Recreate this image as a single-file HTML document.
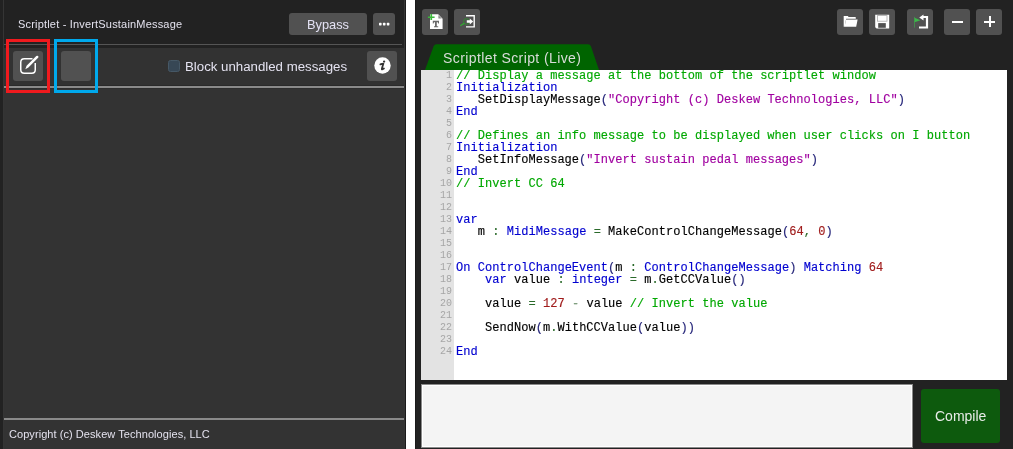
<!DOCTYPE html>
<html><head><meta charset="utf-8">
<style>
*{margin:0;padding:0;box-sizing:border-box}
html,body{width:1013px;height:449px;overflow:hidden;background:#222}
body{position:relative;font-family:"Liberation Sans",sans-serif}
.a{position:absolute}
.btn{position:absolute;background:#515151;border-radius:3px}
.txt{position:absolute;white-space:pre;line-height:1;will-change:transform}
/* code */
#code{will-change:transform;position:absolute;left:456px;top:67px;font-family:"Liberation Mono",monospace;font-size:12px;line-height:12px;white-space:pre;color:#000;letter-spacing:0.04px;-webkit-text-stroke:0.15px currentColor}
#nums{will-change:transform;position:absolute;left:421px;top:67px;width:32px;text-align:right;font-family:"Liberation Mono",monospace;font-size:10px;line-height:12px;white-space:pre;color:#a6a6a6}
.c{color:#00a800}
.k{color:#0000d0}
.s{color:#a000a0}
.n{color:#a01c1c}
.p{color:#26267a}
.o{color:#2a6a2a}
.m{color:#7a9a7a}
</style></head><body>

<!-- LEFT PANEL -->
<div class="a" style="left:0;top:0;width:406px;height:449px;background:#222"></div>
<div class="a" style="left:3px;top:0;width:1px;height:449px;background:#353535"></div>
<div class="a" style="left:404px;top:0;width:1px;height:449px;background:#353535"></div>
<div class="a" style="left:405px;top:0;width:1px;height:449px;background:#1a1a1a"></div>
<!-- title -->
<div class="txt" style="left:18px;top:19px;font-size:11px;color:#e4e2ee;letter-spacing:0.185px">Scriptlet - InvertSustainMessage</div>
<div class="btn" style="left:289px;top:13px;width:78px;height:22px"></div>
<div class="txt" style="left:307px;top:19px;font-size:12.8px;color:#e4e2f4">Bypass</div>
<div class="btn" style="left:373px;top:13px;width:22px;height:22px"></div>
<svg class="a" style="left:373px;top:13px" width="22" height="22" viewBox="373 13 22 22">
<rect x="379" y="22.8" width="2.6" height="2.6" rx="0.6" fill="#fff"/>
<rect x="382.9" y="22.8" width="2.6" height="2.6" rx="0.6" fill="#fff"/>
<rect x="386.8" y="22.8" width="2.6" height="2.6" rx="0.6" fill="#fff"/>
</svg>
<div class="a" style="left:4px;top:44px;width:398px;height:1px;background:#555"></div>
<!-- row 2 -->
<div class="a" style="left:4px;top:48px;width:400px;height:37px;background:#323232"></div>
<div class="a" style="left:4px;top:85px;width:400px;height:1px;background:#2a2a2a"></div>
<div class="a" style="left:4px;top:86px;width:400px;height:2px;background:#8a8a8a"></div>
<div class="a" style="left:4px;top:88px;width:400px;height:1px;background:#2e2e2e"></div>
<div class="a" style="left:4px;top:89px;width:400px;height:329px;background:#333"></div>
<div class="a" style="left:4px;top:418px;width:400px;height:2px;background:#8a8a8a"></div>
<div class="a" style="left:4px;top:420px;width:400px;height:29px;background:#333"></div>
<div class="txt" style="left:9px;top:429px;font-size:11px;color:#e4e2ee;letter-spacing:0.06px">Copyright (c) Deskew Technologies, LLC</div>

<!-- edit button -->
<div class="btn" style="left:13px;top:51px;width:30px;height:30px"></div>
<svg class="a" style="left:13px;top:51px" width="30" height="30" viewBox="0 0 30 30">
  <path d="M19.5 7.75 H11.25 Q7.75 7.75 7.75 11.25 V18.75 Q7.75 22.25 11.25 22.25 H18.75 Q22.25 22.25 22.25 18.75 V12" fill="none" stroke="#fff" stroke-width="1.5"/>
  <path d="M12.3 18.2 L13.6 14.7 L23.3 5.0 Q24.2 4.3 25.1 5.1 Q25.9 6 25.1 6.8 L15.4 16.5 Z" fill="#fff"/>
</svg>
<div class="btn" style="left:61px;top:51px;width:30px;height:30px"></div>
<!-- red / blue boxes -->
<div class="a" style="left:6px;top:39px;width:44px;height:54px;border:3px solid #f01a1e"></div>
<div class="a" style="left:54px;top:39px;width:44px;height:54px;border:3px solid #00a9ec"></div>
<!-- checkbox -->
<div class="a" style="left:168px;top:60px;width:11.5px;height:11.5px;background:#374755;border:1px solid #465866;border-radius:2.5px"></div>
<div class="txt" style="left:185px;top:60px;font-size:13.25px;color:#e4e2f0">Block unhandled messages</div>
<!-- info -->
<div class="btn" style="left:367px;top:51px;width:30px;height:30px"></div>
<svg class="a" style="left:367px;top:51px" width="30" height="30" viewBox="0 0 30 30">
  <circle cx="15.5" cy="14.5" r="8.2" fill="#fff"/>
  <circle cx="17.1" cy="10.6" r="1.15" fill="#333"/>
  <path d="M13.4 13.4 Q15.2 12.6 16.4 12.6 L14.9 17.6 Q14.6 18.7 15.5 18.3 L16.9 17.4" fill="none" stroke="#333" stroke-width="1.8" stroke-linejoin="round" stroke-linecap="round"/>
</svg>

<!-- WHITE STRIP -->
<div class="a" style="left:406px;top:0;width:9px;height:449px;background:#fff"></div>

<!-- RIGHT PANEL -->
<div class="a" style="left:415px;top:0;width:598px;height:449px;background:#222"></div>
<div class="a" style="left:415px;top:0;width:1px;height:449px;background:#1a1a1a"></div>
<!-- toolbar buttons -->
<div class="btn" style="left:422px;top:9px;width:26px;height:26px"></div>
<div class="btn" style="left:454px;top:9px;width:26px;height:26px"></div>
<div class="btn" style="left:837px;top:9px;width:26px;height:26px"></div>
<div class="btn" style="left:869px;top:9px;width:26px;height:26px"></div>
<div class="btn" style="left:907px;top:9px;width:26px;height:26px"></div>
<div class="btn" style="left:944px;top:9px;width:26px;height:26px"></div>
<div class="btn" style="left:976px;top:9px;width:26px;height:26px"></div>
<svg class="a" style="left:415px;top:0" width="598" height="40" viewBox="415 0 598 40">
  <!-- new doc T -->
  <path d="M430 14.2 H438.2 L442.6 18.8 V28.9 H430 Z" fill="#fff"/>
  <path d="M438.4 15 L441.8 18.6 H438.4 Z" fill="#8a8a8a"/>
  <path d="M432.8 20.8 H439 V23.4 H438.2 L437.8 22.3 H436.8 V26.2 H438.2 V27.3 H434 V26.2 H435 V22.3 H434 L433.6 23.4 H432.8 Z" fill="#6a6a6a"/>
  <path d="M427.9 16.4 H430.4 V13.9 H432.1 V16.4 H434.6 V18.1 H432.1 V20 H430.4 V18.1 H427.9 Z" fill="#3cb83c"/>
  <!-- import magnifier -->
  <path d="M466 15.1 H474.9 V27.6 H466 V26.2 H473.5 V16.5 H466 Z" fill="#fff"/>
  <circle cx="466.5" cy="21.5" r="2.9" fill="none" stroke="#2a9a2a" stroke-width="0.75"/>
  <path d="M466.8 20.3 H469.8 V18.6 L473.2 21.5 L469.8 24.4 V22.7 H466.8 Z" fill="#fff"/>
  <path d="M464.3 23.3 L460.3 25.8" stroke="#2fb02f" stroke-width="1.2"/>
  <!-- folder -->
  <path d="M843.7 15.9 H847.8 L848.6 17.1 H855.7 V19.1 H846.1 L844.7 26.7 H843.7 Z" fill="#fff"/>
  <path d="M846.1 19.6 H857.6 L856.2 26.7 H844.5 Z" fill="#fff"/>
  <path d="M846.1 19.1 H855.7" stroke="#8a8a8a" stroke-width="0.8"/>
  <!-- floppy -->
  <path d="M875.2 14.8 H889.2 V28.6 H876.6 L875.2 27.2 Z" fill="#fff"/>
  <rect x="877.6" y="15.6" width="9.4" height="5.6" fill="#fff" stroke="#aaa" stroke-width="0.8"/>
  <rect x="878.2" y="23.1" width="7.6" height="4.7" fill="#515151"/>
  <!-- flag return -->
  <path d="M914.6 16.9 V27.7" stroke="#3cb84a" stroke-width="0.8" opacity="0.75"/>
  <path d="M914.6 17.8 L920.4 20.2 L914.6 22.3 Z" fill="#3cb84a"/>
  <path d="M919.3 17.5 L923.5 14.4 V15.9 H928.1 V28.4 H919 V26.4 H925.9 V17.9 H923.5 V20.6 Z" fill="#fff"/>
</svg>

<!-- minus / plus -->
<div class="a" style="left:952px;top:20.5px;width:11px;height:2px;background:#fff"></div>
<div class="a" style="left:984px;top:20.5px;width:11px;height:2px;background:#fff"></div>
<div class="a" style="left:988.5px;top:16px;width:2px;height:11px;background:#fff"></div>

<!-- tab -->
<svg class="a" style="left:420px;top:40px" width="185" height="31" viewBox="0 0 185 31">
  <path d="M5 30 L13.5 6.5 Q14.3 4.3 16.5 4.3 L168 4.3 Q170.2 4.3 171 6.5 L179 30 Z" fill="#006400"/>
</svg>
<div class="txt" style="left:443px;top:51px;font-size:14px;color:#d8dcd8;letter-spacing:0.4px">Scriptlet Script (Live)</div>

<!-- editor -->
<div class="a" style="left:421px;top:70px;width:586px;height:310px;background:#fff;overflow:hidden">
</div>
<div class="a" style="left:421px;top:70px;width:33px;height:310px;background:#e3e3e3"></div>
<div class="a" style="left:421px;top:70px;width:586px;height:310px;overflow:hidden">
<div id="nums" style="left:0;top:0px;width:31px">1
2
3
4
5
6
7
8
9
10
11
12
13
14
15
16
17
18
19
20
21
22
23
24</div>
<div id="code" style="left:35px;top:0px"><span class="c">// Display a message at the bottom of the scriptlet window</span>
<span class="k">Initialization</span>
   SetDisplayMessage<span class="p">(</span><span class="s">"Copyright (c) Deskew Technologies, LLC"</span><span class="p">)</span>
<span class="k">End</span>

<span class="c">// Defines an info message to be displayed when user clicks on I button</span>
<span class="k">Initialization</span>
   SetInfoMessage<span class="p">(</span><span class="s">"Invert sustain pedal messages"</span><span class="p">)</span>
<span class="k">End</span>
<span class="c">// Invert CC 64</span>


<span class="k">var</span>
   m <span class="o">:</span> <span class="k">MidiMessage</span> <span class="o">=</span> MakeControlChangeMessage<span class="p">(</span><span class="n">64</span><span class="o">,</span> <span class="n">0</span><span class="p">)</span>


<span class="k">On</span> <span class="k">ControlChangeEvent</span><span class="p">(</span>m <span class="o">:</span> <span class="k">ControlChangeMessage</span><span class="p">)</span> <span class="k">Matching</span> <span class="n">64</span>
    <span class="k">var</span> value <span class="o">:</span> <span class="k">integer</span> <span class="o">=</span> m<span class="o">.</span>GetCCValue<span class="p">()</span>

    value <span class="o">=</span> <span class="n">127</span> <span class="m">-</span> value <span class="c">// Invert the value</span>

    SendNow<span class="p">(</span>m<span class="o">.</span>WithCCValue<span class="p">(</span>value<span class="p">))</span>

<span class="k">End</span></div>
</div>

<!-- input + compile -->
<div class="a" style="left:421px;top:384px;width:492px;height:64px;background:#f4f4f4;border:1px solid #8a8a8a;box-shadow:inset 0 0 0 1px #fff"></div>
<div class="a" style="left:921px;top:389px;width:79px;height:54px;background:#0d5a0d;border-radius:3px"></div>
<div class="txt" style="left:935px;top:409px;font-size:14px;color:#e8ece8">Compile</div>

</body></html>
